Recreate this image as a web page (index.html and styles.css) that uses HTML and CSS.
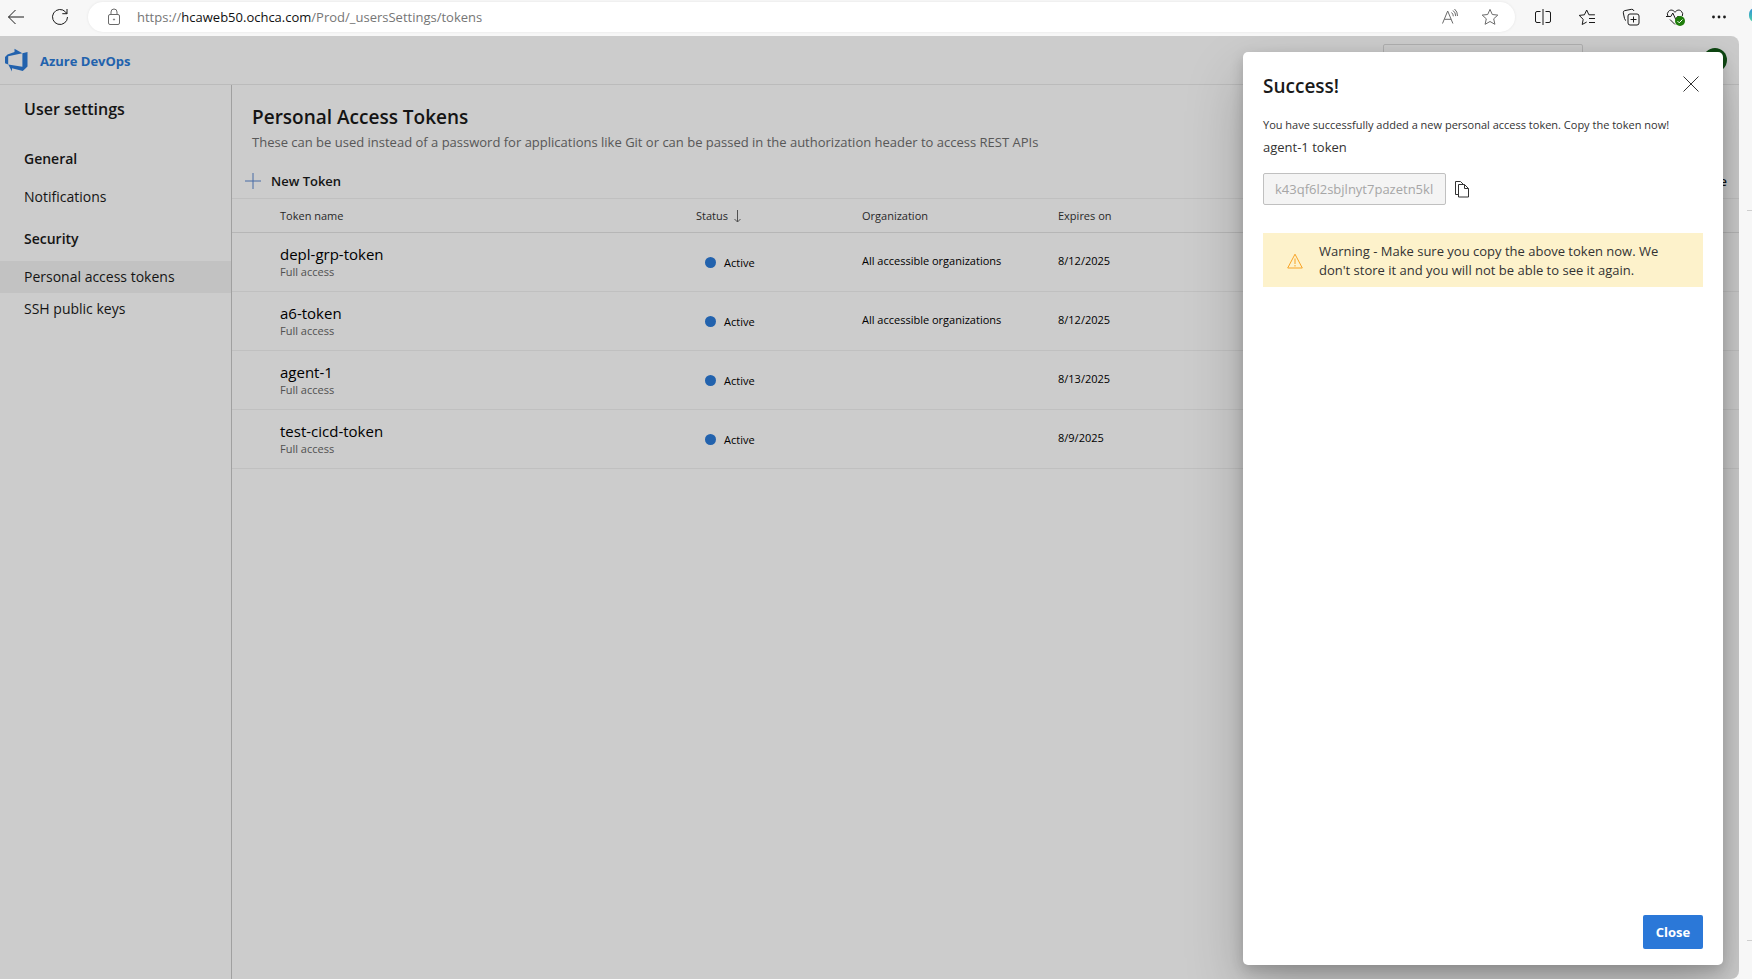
FILE: index.html
```html
<!DOCTYPE html>
<html lang="en">
<head>
<meta charset="utf-8">
<title>Personal Access Tokens</title>
<link rel="stylesheet" href="styles.css">
</head>
<body>
<div class="browser">
  <header class="toolbar">
    <div class="nav-buttons">
      <button class="tool" aria-label="Back"><svg width="18" height="18" viewBox="0 0 18 18"><path d="M17 9H1.500M8.500 2L1.500 9l7 7"/></svg></button>
      <button class="tool" aria-label="Refresh"><svg width="18" height="18" viewBox="0 0 18 18"><path d="M16.500 9A7.500 7.500 0 1 1 14.600 4L16 5.600M16 1v4.700h-4.700"/></svg></button>
    </div>
    <div class="address">
      <svg class="muted" width="14" height="18" viewBox="0 0 14 18"><rect x="1.500" y="6.500" width="11" height="10" rx="1.500"/><path d="M4 6.500V4a3 3 0 0 1 6 0v2.500"/><circle cx="7" cy="11.500" r=".6"/></svg>
      <div class="url">https://<b>hcaweb50.ochca.com</b>/Prod/_usersSettings/tokens</div>
      <button class="tool muted" aria-label="Read aloud"><svg width="18" height="18" viewBox="0 0 18 18"><path d="M1.500 15.500L6.700 3l5.200 12.500M3.300 11.300h6.800M10.500 4.500q1.800 1.400 1.800 3.800M12 2.500q2.700 2 2.700 5.600M13.500 1q3.200 2.600 3 7"/></svg></button>
      <button class="tool muted" aria-label="Add to favorites"><svg width="18" height="18" viewBox="0 0 18 18"><path d="M9 1.400l2.300 5.100 5.500.6-4.100 3.700 1.200 5.500L9 13.500l-4.900 2.800 1.200-5.500L1.200 7.100l5.500-.6z"/></svg></button>
    </div>
    <div class="actions">
      <button class="tool" aria-label="Split screen"><svg width="18" height="18" viewBox="0 0 18 18"><path d="M9 1v16M6.500 3.500H3A1.500 1.500 0 0 0 1.500 5v8A1.500 1.500 0 0 0 3 14.500h3.500M11.500 3.500H15A1.500 1.500 0 0 1 16.500 5v8a1.500 1.500 0 0 1-1.500 1.500h-3.500"/></svg></button>
      <button class="tool" aria-label="Favorites"><svg width="18" height="18" viewBox="0 0 18 18"><path d="M8.700 14l-4.500 2.500 1-5.200L1.200 7.400l5.200-.6L8.700 2l2.200 4.800h6M11 10.500h6M11 14.500h6"/></svg></button>
      <button class="tool" aria-label="Collections"><svg width="18" height="18" viewBox="0 0 18 18"><rect x="6" y="6" width="11" height="11" rx="2"/><path d="M11.500 8.500v6M8.500 11.500h6M4 12.500Q2.800 12 2.500 10.500L1.300 4.800Q1 3 2.800 2.600L9.500 1.300Q11.300 1 12 3"/></svg></button>
      <button class="tool" aria-label="Browser essentials"><svg class="wide-icon" width="18" height="18" viewBox="0 0 18 18"><path d="M2 8.500Q.3 5.500 2.600 3.300C4.600 1.200 7.500 2 9 4.300 10.500 2 13.400 1.200 15.400 3.300Q17.500 5.500 16.300 8M0 8.500h4.800l2-3.500 3 6.500 1.700-3h2M4 11.500l5 5"/><circle class="badge" cx="14" cy="13" r="5"/><path class="tick" d="M11.500 13.100l1.700 1.700 3.300-3.300"/></svg></button>
      <button class="tool" aria-label="Settings and more"><svg width="18" height="18" viewBox="0 0 18 18"><g class="solid"><circle cx="3.500" cy="9" r="1.400"/><circle cx="9" cy="9" r="1.400"/><circle cx="14.500" cy="9" r="1.400"/></g></svg></button>
    </div>
    <span class="copilot"></span>
  </header>

  <div class="body">
    <div class="page">
      <header class="site-header">
        <svg class="logo" width="23" height="24" viewBox="0 0 23 24"><path d="M9.500.8V4L2.500 6.500 0 9v6.200L3.200 16.600V8.200L17.400 5.200zM17.400 5.200L22.500 4v14.500L17.800 23 7 20.200v3.200L3.200 16.600l14.200 2.200z"/></svg>
        <a class="brand" href="#">Azure DevOps</a>
        <input class="search" type="text" aria-label="Search">
        <span class="avatar"></span>
      </header>
      <div class="columns">
        <nav class="sidebar">
          <h2>User settings</h2>
          <h3>General</h3>
          <a href="#">Notifications</a>
          <h3 class="second">Security</h3>
          <a class="current" href="#">Personal access tokens</a>
          <a href="#">SSH public keys</a>
        </nav>
        <main class="main">
          <h1>Personal Access Tokens</h1>
          <p class="intro">These can be used instead of a password for applications like Git or can be passed in the authorization header to access REST APIs</p>
          <div class="commands">
            <button class="new-token"><svg width="16" height="16" viewBox="0 0 16 16"><path d="M8 0v16M0 8h16"/></svg>New Token</button>
            <button class="filter">Active</button>
          </div>
          <table class="tokens">
            <colgroup><col class="c-name"><col class="c-status"><col class="c-org"><col></colgroup>
            <thead>
              <tr><th>Token name</th><th>Status <svg width="9" height="13" viewBox="0 0 9 13"><path d="M4.500 0v12M1.500 9l3 3 3-3"/></svg></th><th>Organization</th><th>Expires on</th></tr>
            </thead>
            <tbody>
              <tr><td><div class="name">depl-grp-token</div><div class="scope">Full access</div></td><td><span class="status">Active</span></td><td>All accessible organizations</td><td>8/12/2025</td></tr>
              <tr><td><div class="name">a6-token</div><div class="scope">Full access</div></td><td><span class="status">Active</span></td><td>All accessible organizations</td><td>8/12/2025</td></tr>
              <tr><td><div class="name">agent-1</div><div class="scope">Full access</div></td><td><span class="status">Active</span></td><td></td><td>8/13/2025</td></tr>
              <tr><td><div class="name">test-cicd-token</div><div class="scope">Full access</div></td><td><span class="status">Active</span></td><td></td><td>8/9/2025</td></tr>
            </tbody>
          </table>
        </main>
      </div>
      <div class="scrim">
        <section class="dialog" role="dialog" aria-labelledby="dialog-title">
          <div class="dialog-head">
            <h2 id="dialog-title">Success!</h2>
            <button class="dismiss" aria-label="Dismiss"><svg width="16" height="16" viewBox="0 0 16 16"><path d="M.5.5l15 15M15.500.5l-15 15"/></svg></button>
          </div>
          <p class="message">You have successfully added a new personal access token. Copy the token now!</p>
          <label class="token-label" for="token">agent-1 token</label>
          <div class="token-row">
            <input id="token" type="text" value="k43qf6l2sbjlnyt7pazetn5kl" disabled>
            <button class="copy" aria-label="Copy to clipboard"><svg width="16" height="17" viewBox="0 0 16 17"><path d="M4.500 13.500H1.500V.5h5l3 3M4.500 3.500h6l4 4v8.500h-10zM10.500 3.500v4h4"/></svg></button>
          </div>
          <div class="warning" role="alert">
            <svg width="16" height="16" viewBox="0 0 16 16"><path d="M8 1.200L15.300 15H.7zM8 5.500v5.500M8 12v1.500"/></svg>
            <p>Warning - Make sure you copy the above token now. We don't store it and you will not be able to see it again.</p>
          </div>
          <button class="close">Close</button>
        </section>
      </div>
    </div>
    <aside class="edge"><hr><hr></aside>
  </div>
</div>
</body>
</html>
```
FILE: styles.css
```css
* { box-sizing: border-box; }

body {
  margin: 0;
  font-family: "Open Sans", "Noto Sans", sans-serif;
  font-size: 13px;
  color: #1a1a1a;
  background: #f7f7f7;
}

h1, h2, h3, p { margin: 0; font-weight: 400; }
a { color: inherit; text-decoration: none; }
button { font: inherit; color: inherit; background: none; border: 0; padding: 0; }
svg { display: block; flex: none; fill: none; stroke: currentColor; }

.browser {
  height: 100vh;
  display: flex;
  flex-direction: column;
  overflow: hidden;
}

/* Browser toolbar */
.toolbar {
  position: relative;
  height: 36px;
  flex: none;
  display: flex;
  align-items: center;
  padding: 0 24px 2px 7px;
}
.tool { display: block; }
.nav-buttons { display: flex; gap: 26px; width: 81px; }
.address {
  flex: 1;
  height: 30px;
  display: flex;
  align-items: center;
  padding: 0 16px 0 19px;
  background: #fff;
  border-radius: 15px;
  box-shadow: 0 0 3px rgba(0, 0, 0, .08);
}
.muted { color: #6b6b6b; }
.url { flex: 1; margin-left: 16px; color: #767676; }
.url b { font-weight: 400; color: #111; }
.address .tool + .tool { margin-left: 22px; }
.actions { display: flex; align-items: center; gap: 26px; margin-left: 19px; }
.wide-icon { overflow: visible; }
.badge { fill: #1f7d0b; stroke: none; }
.tick { stroke: #fff; }
.solid { fill: currentColor; stroke: none; }
.copilot {
  position: absolute;
  right: -13px;
  top: 8px;
  width: 16px;
  height: 14px;
  border-radius: 6px;
  background: linear-gradient(#2f8fd8, #4fd3a8);
}

/* Page frame */
.body { flex: 1; display: flex; min-height: 0; }
.page {
  position: relative;
  flex: 1;
  display: flex;
  flex-direction: column;
  background: #fff;
  border-radius: 0 8px 8px 0;
  overflow: hidden;
}
.edge {
  width: 13px;
  padding: 174px 0 38px 8px;
  display: flex;
  flex-direction: column;
  justify-content: space-between;
}
.edge hr { width: 100%; margin: 0; border: 0; border-top: 1px solid #cfcfcf; }

.site-header {
  height: 49px;
  flex: none;
  display: flex;
  align-items: center;
  padding-right: 12px;
  padding-left: 5px;
  border-bottom: 1px solid #eaeaea;
}
.logo { fill: #2b7bd9; stroke: none; }
.brand { margin-left: 12px; padding-top: 2px; font-weight: 700; color: #2b7bd9; }
.search {
  width: 200px;
  height: 32px;
  margin-left: auto;
  margin-right: 120px;
  border: 1px solid #dcdcdc;
  border-radius: 2px;
}
.avatar { width: 24px; height: 24px; border-radius: 50%; background: #135a18; }

.columns { flex: 1; display: flex; }
.sidebar {
  width: 232px;
  flex: none;
  padding-top: 12px;
  border-right: 1px solid #c8c8c8;
  font-size: 14px;
}
.sidebar h2 { padding-left: 24px; font-size: 16px; font-weight: 600; line-height: 24px; }
.sidebar h3 { padding-left: 24px; margin: 22px 0 6px; font-size: 14px; font-weight: 600; line-height: 32px; }
.sidebar .second { margin-top: 10px; }
.sidebar a { display: block; padding-left: 24px; line-height: 32px; }
.sidebar .current { background: #f3f3f3; }

.main { flex: 1; min-width: 0; padding-top: 18px; }
.main h1 { padding-left: 20px; font-size: 19px; font-weight: 600; line-height: 28px; }
.intro { padding: 1px 0 0 20px; line-height: 20px; color: #6e6e6e; }
.commands {
  height: 46px;
  display: flex;
  align-items: center;
  justify-content: space-between;
  padding: 11px 12px 0 13px;
  font-weight: 600;
}
.new-token { display: flex; align-items: center; gap: 10px; }
.new-token svg { color: #5a86d0; }

.tokens {
  width: 100%;
  table-layout: fixed;
  border-collapse: collapse;
  font-size: 11px;
}
.c-name { width: 464px; }
.c-status { width: 166px; }
.c-org { width: 196px; }
.tokens th {
  height: 34px;
  padding: 0;
  text-align: left;
  font-weight: 400;
  color: #333;
  border-top: 1px solid #f0f0f0;
  border-bottom: 1px solid #e4e4e4;
}
.tokens th svg { display: inline-block; vertical-align: -3px; margin-left: 2px; color: #666; }
.tokens td { height: 59px; padding: 0 0 4px; color: #000; border-bottom: 1px solid #f0f0f0; }
.tokens td:nth-child(2) { padding: 0; }
.tokens th:first-child { padding-left: 48px; }
.tokens td:first-child { padding: 0 0 0 48px; }
.name { font-size: 15px; line-height: 20px; }
.scope { line-height: 16px; color: #666; }
.status { display: flex; align-items: center; gap: 8px; padding-left: 9px; }
.status::before { content: ""; width: 11px; height: 11px; border-radius: 50%; background: #2b7bd9; }

/* Dialog */
.scrim {
  position: absolute;
  inset: 0;
  display: flex;
  justify-content: flex-end;
  padding: 16px 16px 14px;
  background: rgba(0, 0, 0, .2);
}
.dialog {
  width: 480px;
  display: flex;
  flex-direction: column;
  padding: 20px 20px 16px;
  background: #fff;
  border-radius: 5px;
  box-shadow: 0 26px 58px rgba(0, 0, 0, .22), 0 5px 14px rgba(0, 0, 0, .18);
  color: #333;
}
.dialog-head { display: flex; justify-content: space-between; align-items: center; height: 28px; }
.dialog-head h2 { font-size: 19px; font-weight: 600; color: #1a1a1a; }
.dismiss { margin-right: 4px; padding-bottom: 4px; }
.message { margin-top: 17px; font-size: 11px; line-height: 16px; }
.token-label { margin-top: 4px; line-height: 20px; }
.token-row { display: flex; align-items: center; gap: 8px; margin-top: 16px; }
.token-row input {
  width: 183px;
  height: 32px;
  padding: 0 11px;
  font: inherit;
  color: #a6a6a6;
  background: #f4f4f4;
  border: 1px solid #c0c0c0;
  border-radius: 2px;
}
.warning {
  display: flex;
  align-items: center;
  gap: 16px;
  margin-top: 28px;
  padding: 9px 24px 7px;
  background: #fdf2cb;
}
.warning svg { color: #f7a325; }
.warning p { line-height: 19px; }
.close {
  width: 60px;
  height: 34px;
  margin-top: auto;
  align-self: flex-end;
  background: #2b78d8;
  border-radius: 2px;
  color: #fff;
  font-weight: 700;
}
```
